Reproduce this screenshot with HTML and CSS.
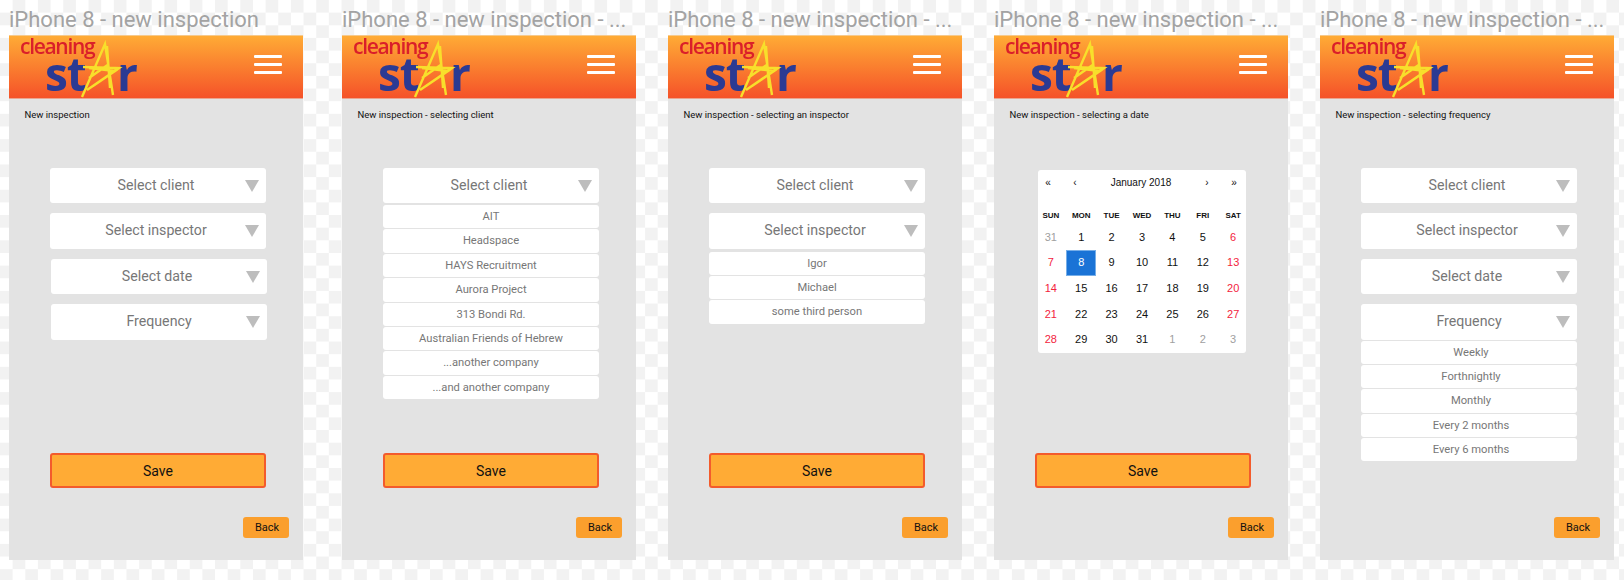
FILE: index.html
```html
<!DOCTYPE html>
<html lang="en">
<head>
    <meta charset="UTF-8">
    <title>Cleaning Star - new inspection</title>
    <link rel="stylesheet" href="styles.css">
</head>
<body>
    <svg class="defs" width="0" height="0">
        <symbol id="logoStar" viewBox="0 0 45 60">
            <path d="M3 57 L26 4 L34 55 M28 6 L31 48 M4 27 L40 28 L8 50 M10 28 L36 31 L14 46 M10 38 L30 24" fill="none" stroke="#f8df2b" stroke-width="2.4"/>
        </symbol>
    </svg>

    <div class="board">
        <section class="artboard">
            <h1 class="artboard-title">iPhone 8 - new inspection</h1>
            <div class="screen">
                <header class="topbar">
                    <div class="logo">
                        <span class="logo-top">cleaning</span>
                        <span class="logo-st">st</span>
                        <span class="logo-r">r</span>
                        <svg class="logo-star"><use href="#logoStar"/></svg>
                    </div>
                    <div class="burger"><i></i><i></i><i></i></div>
                </header>
                <p class="crumb">New inspection</p>
                <div class="form">
                    <div class="select">Select client</div>
                    <div class="select">Select inspector</div>
                    <div class="select nudge">Select date</div>
                    <div class="select nudge freq">Frequency</div>
                </div>
                <button class="save">Save</button>
                <button class="back">Back</button>
            </div>
        </section>

        <section class="artboard">
            <h1 class="artboard-title">iPhone 8 - new inspection - ...</h1>
            <div class="screen">
                <header class="topbar">
                    <div class="logo">
                        <span class="logo-top">cleaning</span>
                        <span class="logo-st">st</span>
                        <span class="logo-r">r</span>
                        <svg class="logo-star"><use href="#logoStar"/></svg>
                    </div>
                    <div class="burger"><i></i><i></i><i></i></div>
                </header>
                <p class="crumb">New inspection - selecting client</p>
                <div class="form">
                    <div class="select open">Select client</div>
                    <div class="option">AIT</div>
                    <div class="option">Headspace</div>
                    <div class="option">HAYS Recruitment</div>
                    <div class="option">Aurora Project</div>
                    <div class="option">313 Bondi Rd.</div>
                    <div class="option">Australian Friends of Hebrew</div>
                    <div class="option">...another company</div>
                    <div class="option">...and another company</div>
                </div>
                <button class="save">Save</button>
                <button class="back">Back</button>
            </div>
        </section>

        <section class="artboard">
            <h1 class="artboard-title">iPhone 8 - new inspection - ...</h1>
            <div class="screen">
                <header class="topbar">
                    <div class="logo">
                        <span class="logo-top">cleaning</span>
                        <span class="logo-st">st</span>
                        <span class="logo-r">r</span>
                        <svg class="logo-star"><use href="#logoStar"/></svg>
                    </div>
                    <div class="burger"><i></i><i></i><i></i></div>
                </header>
                <p class="crumb">New inspection - selecting an inspector</p>
                <div class="form">
                    <div class="select">Select client</div>
                    <div class="select open wide-gap">Select inspector</div>
                    <div class="option">Igor</div>
                    <div class="option">Michael</div>
                    <div class="option">some third person</div>
                </div>
                <button class="save">Save</button>
                <button class="back">Back</button>
            </div>
        </section>

        <section class="artboard">
            <h1 class="artboard-title">iPhone 8 - new inspection - ...</h1>
            <div class="screen">
                <header class="topbar">
                    <div class="logo">
                        <span class="logo-top">cleaning</span>
                        <span class="logo-st">st</span>
                        <span class="logo-r">r</span>
                        <svg class="logo-star"><use href="#logoStar"/></svg>
                    </div>
                    <div class="burger"><i></i><i></i><i></i></div>
                </header>
                <p class="crumb">New inspection - selecting a date</p>
                <div class="form">
                    <div class="calendar">
                        <div class="cal-nav">
                            <span>«</span>
                            <span>‹</span>
                            <span class="cal-month">January 2018</span>
                            <span>›</span>
                            <span>»</span>
                        </div>
                        <div class="cal-grid cal-days">
                            <b>SUN</b><b>MON</b><b>TUE</b><b>WED</b><b>THU</b><b>FRI</b><b>SAT</b>
                        </div>
                        <div class="cal-grid">
                            <span class="muted">31</span><span>1</span><span>2</span><span>3</span><span>4</span><span>5</span><span class="red">6</span>
                            <span class="red">7</span><span class="today">8</span><span>9</span><span>10</span><span>11</span><span>12</span><span class="red">13</span>
                            <span class="red">14</span><span>15</span><span>16</span><span>17</span><span>18</span><span>19</span><span class="red">20</span>
                            <span class="red">21</span><span>22</span><span>23</span><span>24</span><span>25</span><span>26</span><span class="red">27</span>
                            <span class="red">28</span><span>29</span><span>30</span><span>31</span><span class="muted">1</span><span class="muted">2</span><span class="muted">3</span>
                        </div>
                    </div>
                </div>
                <button class="save">Save</button>
                <button class="back">Back</button>
            </div>
        </section>

        <section class="artboard">
            <h1 class="artboard-title">iPhone 8 - new inspection - ...</h1>
            <div class="screen">
                <header class="topbar">
                    <div class="logo">
                        <span class="logo-top">cleaning</span>
                        <span class="logo-st">st</span>
                        <span class="logo-r">r</span>
                        <svg class="logo-star"><use href="#logoStar"/></svg>
                    </div>
                    <div class="burger"><i></i><i></i><i></i></div>
                </header>
                <p class="crumb">New inspection - selecting frequency</p>
                <div class="form">
                    <div class="select">Select client</div>
                    <div class="select">Select inspector</div>
                    <div class="select">Select date</div>
                    <div class="select open tight-gap freq">Frequency</div>
                    <div class="option shifted">Weekly</div>
                    <div class="option shifted">Forthnightly</div>
                    <div class="option shifted">Monthly</div>
                    <div class="option shifted">Every 2 months</div>
                    <div class="option shifted">Every 6 months</div>
                </div>
                <button class="back">Back</button>
            </div>
        </section>
    </div>
</body>
</html>
```

FILE: styles.css
```css
body {
    margin: 0;
    height: 580px;
    overflow: hidden;
    font-family: Roboto, sans-serif;
    background-color: #fff;
    background-image: conic-gradient(#f2f2f2 25%, #fff 0 50%, #f2f2f2 0 75%, #fff 0);
    background-size: 25.3px 25.3px;
}

.defs {
    display: block;
    height: 0;
}

.board {
    display: flex;
    gap: 32px;
    padding-left: 9px;
}

.artboard {
    width: 294px;
    flex: none;
}

.artboard:first-child {
    margin-right: 7px;
}

.artboard-title {
    margin: 0;
    height: 35px;
    font-size: 22px;
    line-height: 39px;
    font-weight: 400;
    color: #a3a3a3;
    white-space: nowrap;
}

.screen {
    height: 525px;
    display: flex;
    flex-direction: column;
    background: #e3e3e3;
    box-sizing: border-box;
    padding-bottom: 22px;
}

.topbar {
    height: 64px;
    flex: none;
    position: relative;
    background: linear-gradient(#ffab35, #f55229);
    border-top: 1px solid #f6c98c;
    border-bottom: 1px solid #eaa590;
    box-sizing: border-box;
}

.logo {
    position: absolute;
    inset: -1px 0 0;
    filter: blur(0.4px);
}

.logo span {
    position: absolute;
}

.logo-top {
    left: 11px;
    top: 2px;
    font-family: "Open Sans", sans-serif;
    font-size: 21px;
    font-weight: 600;
    line-height: 18px;
    letter-spacing: -1.3px;
    color: #da1f2a;
}

.logo-st,
.logo-r {
    top: 21px;
    font-family: "Open Sans", sans-serif;
    font-size: 46px;
    font-weight: 700;
    line-height: 34px;
    color: #2b3a93;
}

.logo-st {
    left: 36px;
    letter-spacing: -1px;
}

.logo-r {
    left: 108px;
}

.logo-star {
    position: absolute;
    left: 70px;
    top: 5px;
    width: 45px;
    height: 60px;
}

.burger {
    position: absolute;
    left: 245px;
    top: 19px;
    width: 28px;
    display: flex;
    flex-direction: column;
    gap: 5px;
}

.burger i {
    height: 3px;
    background: #fff;
    border-radius: 1px;
}

.crumb {
    margin: 0;
    padding: 9.5px 0 0 15.5px;
    height: 24px;
    font-size: 9.5px;
    line-height: 12px;
    color: #111;
}

.form {
    flex: 1;
    display: flex;
    flex-direction: column;
    padding: 35px 0 0 41px;
}

.select {
    width: 216px;
    height: 35.5px;
    flex: none;
    position: relative;
    box-sizing: border-box;
    margin-bottom: 10px;
    padding-right: 4px;
    background: #fff;
    border-radius: 3px;
    font-size: 14.2px;
    line-height: 35.5px;
    text-align: center;
    color: #777;
}

.select::after {
    content: "";
    position: absolute;
    right: 7px;
    top: 12px;
    border-style: solid;
    border-width: 12px 7px 0;
    border-color: #bdbdbd transparent transparent;
}

.select.open {
    margin-bottom: 2px;
}

.select.wide-gap {
    margin-bottom: 3px;
}

.select.tight-gap {
    margin-bottom: 1px;
}

.select.freq {
    padding-right: 0;
}

.nudge {
    margin-left: 1px;
}

.option {
    width: 216px;
    height: 23.4px;
    flex: none;
    margin-bottom: 1px;
    background: #fff;
    border-radius: 3px;
    font-size: 11.2px;
    line-height: 23.4px;
    text-align: center;
    color: #777;
}

.option.shifted {
    padding-left: 4px;
    box-sizing: border-box;
}

.save {
    width: 216px;
    height: 35px;
    flex: none;
    margin: 0 0 29px 41px;
    padding: 0;
    background: #ffab35;
    border: 2px solid #f35b2c;
    border-radius: 3px;
    font-family: inherit;
    font-size: 14px;
    color: #111;
}

.back {
    width: 46px;
    height: 21px;
    flex: none;
    align-self: flex-end;
    margin-right: 14px;
    padding: 0 0 0 2px;
    background: #fb9f2d;
    border: none;
    border-radius: 3px;
    font-family: inherit;
    font-size: 11px;
    color: #111;
}

.calendar {
    width: 208px;
    height: 183px;
    margin: 2px 0 0 3px;
    background: #fff;
    border-radius: 3px;
    font-family: "Liberation Sans", sans-serif;
    color: #111;
}

.cal-nav {
    display: grid;
    grid-template-columns: 20px 34px 1fr 34px 20px;
    padding: 5px 2px 0 0;
    height: 16px;
    font-size: 10px;
    line-height: 15px;
    text-align: center;
}

.cal-month {
    font-size: 10px;
    line-height: 16px;
}

.cal-grid {
    display: grid;
    grid-template-columns: repeat(7, 30.4px);
    grid-auto-rows: 25.7px;
    justify-content: center;
    font-size: 11px;
    line-height: 25.7px;
    text-align: center;
}

.cal-days {
    grid-auto-rows: 16px;
    margin-top: 18px;
    font-size: 8px;
    line-height: 14px;
}

.cal-grid .red {
    color: #f3233d;
}

.cal-grid .muted {
    color: #a0a0a0;
}

.cal-grid .today {
    color: #fff;
    background: #1a73d6;
    box-shadow: inset 0 0 0 1px #76aee8;
}
```
